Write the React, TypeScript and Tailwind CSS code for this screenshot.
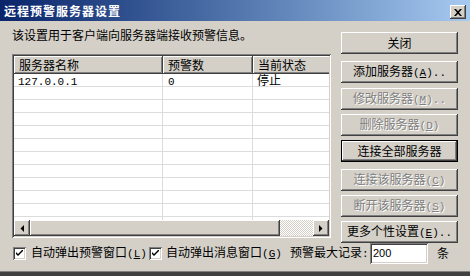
import React from "react";

const RAISED =
  "shadow-[inset_-1px_-1px_#404040,inset_1px_1px_#ffffff,inset_-2px_-2px_#808080,inset_2px_2px_#d4d0c8]";
const SUNKEN =
  "shadow-[inset_1px_1px_#808080,inset_-1px_-1px_#ffffff,inset_2px_2px_#404040,inset_-2px_-2px_#d4d0c8]";
const DEFAULT_BTN =
  "shadow-[inset_0_0_0_1px_#000000,inset_-2px_-2px_#404040,inset_2px_2px_#ffffff,inset_-3px_-3px_#808080]";

function Asc({ children }: { children: React.ReactNode }) {
  return <span className="font-['Liberation_Mono',monospace] text-[11px]">{children}</span>;
}

function Btn({
  children,
  disabled,
  def,
  mt,
}: {
  children: React.ReactNode;
  disabled?: boolean;
  def?: boolean;
  mt: string;
}) {
  return (
    <div
      className={`${mt} h-[22px] w-[117px] shrink-0 bg-[#d4d0c8] flex items-center justify-center text-[12px] leading-none ${
        def ? DEFAULT_BTN : RAISED
      } ${disabled ? "text-[#808080] [text-shadow:1px_1px_0_#ffffff]" : "text-black"}`}
    >
      <span className="flex items-baseline">{children}</span>
    </div>
  );
}

function HeaderCell({ children, w }: { children: React.ReactNode; w: string }) {
  return (
    <div className={`${w} shrink-0 h-[18px] bg-[#d4d0c8] ${RAISED} pl-[5px] flex items-center text-[12px] leading-none`}>
      {children}
    </div>
  );
}

function Row({ a, b, c }: { a?: React.ReactNode; b?: React.ReactNode; c?: React.ReactNode }) {
  return (
    <div className="flex h-[13px] shrink-0 border-b border-[#dcdcdc] text-[12px] leading-[12px]">
      <div className="w-[149px] shrink-0 border-r border-[#dcdcdc] pl-[4px]">{a}</div>
      <div className="w-[90px] shrink-0 border-r border-[#dcdcdc] pl-[5px]">{b}</div>
      <div className="w-[100px] shrink-0 pl-[4px]">{c}</div>
    </div>
  );
}

function Check() {
  return (
    <div className={`w-[13px] h-[13px] shrink-0 bg-white ${SUNKEN} flex items-center justify-center`}>
      <svg width="7" height="7" viewBox="0 0 7 7">
        <path d="M0 2 L0 4 L2 6 L7 1 L7 -1 L2 4 Z" fill="#000" />
      </svg>
    </div>
  );
}

export default function App() {
  const rows = Array.from({ length: 11 });
  return (
    <div className="w-[470px] h-[276px] bg-[#d4d0c8] flex flex-col font-['Noto_Sans_CJK_SC',sans-serif] text-black overflow-hidden">
      {/* Title bar */}
      <div className="h-[21px] shrink-0 flex items-center bg-linear-to-r from-[#0a246a] to-[#a6caf0] pl-[4px] pr-[4px]">
        <span className="text-white font-bold text-[12px] tracking-[1px] leading-none">远程预警服务器设置</span>
        <div className={`ml-auto mt-[3px] w-[16px] h-[14px] bg-[#d4d0c8] ${RAISED} flex items-center justify-center`}>
          <svg width="8" height="7" viewBox="0 0 8 7">
            <path d="M0 0 H2 L4 2.3 L6 0 H8 L5 3.5 L8 7 H6 L4 4.7 L2 7 H0 L3 3.5 Z" fill="#000" />
          </svg>
        </div>
      </div>

      {/* Main area */}
      <div className="flex shrink-0">
        <div className="ml-[12px] w-[319px] flex flex-col">
          <div className="mt-[7px] h-[14px] leading-[14px] text-[12px]">该设置用于客户端向服务器端接收预警信息。</div>
          <div className={`mt-[12px] w-[319px] h-[184px] bg-white ${SUNKEN} p-[2px] flex flex-col`}>
            <div className="flex h-[18px] shrink-0 overflow-hidden">
              <HeaderCell w="w-[149px]">服务器名称</HeaderCell>
              <HeaderCell w="w-[90px]">预警数</HeaderCell>
              <HeaderCell w="w-[100px]">当前状态</HeaderCell>
            </div>
            <div className="flex-1 overflow-hidden flex flex-col">
              <Row a={<Asc>127.0.0.1</Asc>} b={<Asc>0</Asc>} c="停止" />
              {rows.map((_, i) => (
                <Row key={i} />
              ))}
            </div>
            {/* Horizontal scrollbar */}
            <div className="h-[16px] shrink-0 flex">
              <div className={`w-[16px] h-[16px] bg-[#d4d0c8] ${RAISED} flex items-center justify-center`}>
                <svg width="4" height="7" viewBox="0 0 4 7">
                  <path d="M4 0 V7 L0.5 3.5 Z" fill="#000" />
                </svg>
              </div>
              <div className={`w-[250px] h-[16px] bg-[#d4d0c8] ${RAISED}`} />
              <div className="flex-1 h-[16px] bg-[repeating-conic-gradient(#ffffff_0_25%,#d4d0c8_0_50%)] bg-size-[2px_2px]" />
              <div className={`w-[16px] h-[16px] bg-[#d4d0c8] ${RAISED} flex items-center justify-center`}>
                <svg width="4" height="7" viewBox="0 0 4 7">
                  <path d="M0 0 V7 L3.5 3.5 Z" fill="#000" />
                </svg>
              </div>
            </div>
          </div>
        </div>

        <div className="ml-[10px] w-[117px] flex flex-col pt-[11px]">
          <Btn mt="mt-0">关闭</Btn>
          <Btn mt="mt-[7px]">
            添加服务器<Asc>(<u>A</u>)..</Asc>
          </Btn>
          <Btn mt="mt-[5px]" disabled>
            修改服务器<Asc>(<u>M</u>)..</Asc>
          </Btn>
          <Btn mt="mt-[4px]" disabled>
            删除服务器<Asc>(<u>D</u>)</Asc>
          </Btn>
          <Btn mt="mt-[4px]" def>
            连接全部服务器
          </Btn>
          <Btn mt="mt-[7px]" disabled>
            连接该服务器<Asc>(<u>C</u>)</Asc>
          </Btn>
          <Btn mt="mt-[4px]" disabled>
            断开该服务器<Asc>(<u>S</u>)</Asc>
          </Btn>
          <Btn mt="mt-[4px]">
            更多个性设置<Asc>(<u>E</u>)..</Asc>
          </Btn>
        </div>
      </div>

      {/* Bottom row */}
      <div className="mt-[-1px] h-[22px] shrink-0 flex items-center text-[12px] leading-none">
        <div className="ml-[13px]">
          <Check />
        </div>
        <span className="ml-[5px] w-[118px] shrink-0 flex items-baseline">
          自动弹出预警窗口<Asc>(<u>L</u>)</Asc>
        </span>
        <Check />
        <span className="ml-[4px] w-[124px] shrink-0 flex items-baseline">
          自动弹出消息窗口<Asc>(<u>G</u>)</Asc>
        </span>
        <span className="w-[80px] shrink-0 flex items-baseline">
          预警最大记录<Asc>:</Asc>
        </span>
        <div className={`w-[58px] h-[21px] shrink-0 bg-white ${SUNKEN} pl-[3px] flex items-center font-['Liberation_Sans',sans-serif] text-[11px]`}>
          200
        </div>
        <span className="ml-[9px]">条</span>
      </div>

      <div className="mt-auto h-[5px] shrink-0 bg-[#404040] border-t border-[#808080]" />
    </div>
  );
}
